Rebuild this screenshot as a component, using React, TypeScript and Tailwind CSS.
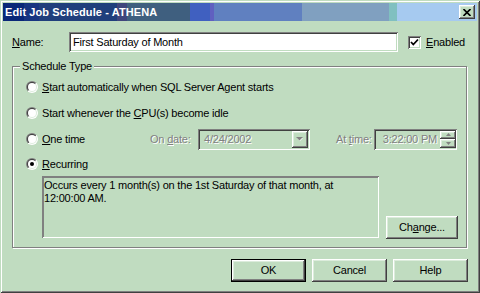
import React from "react";

const raised =
  "shadow-[inset_-1px_-1px_0_#404040,inset_1px_1px_0_#ffffff,inset_-2px_-2px_0_#808080,inset_2px_2px_0_#dcecdc]";
const sunken =
  "shadow-[inset_1px_1px_0_#808080,inset_-1px_-1px_0_#ffffff,inset_2px_2px_0_#404040,inset_-2px_-2px_0_#c0dcc0]";
const disabledText = "text-[#808080] [text-shadow:1px_1px_0_#ffffff]";

function Radio({ checked }: { checked?: boolean }) {
  return (
    <div className="w-[12px] h-[12px] rounded-full bg-[linear-gradient(135deg,#808080_50%,#ffffff_50%)] flex items-center justify-center shrink-0">
      <div className="w-[10px] h-[10px] rounded-full bg-[linear-gradient(135deg,#404040_50%,#dcecdc_50%)] flex items-center justify-center">
        <div className="w-[8px] h-[8px] rounded-full bg-white flex items-center justify-center">
          {checked && <div className="w-[4px] h-[4px] rounded-full bg-black" />}
        </div>
      </div>
    </div>
  );
}

function Button({
  children,
  isDefault,
  className = "",
}: {
  children: React.ReactNode;
  isDefault?: boolean;
  className?: string;
}) {
  if (isDefault) {
    return (
      <div className={`border border-black ${className}`}>
        <div className={`w-full h-full flex items-center justify-center ${raised}`}>{children}</div>
      </div>
    );
  }
  return <div className={`flex items-center justify-center ${raised} ${className}`}>{children}</div>;
}

export default function App() {
  return (
    <div className="w-[480px] h-[293px] bg-[#c0dcc0] p-[3px] flex flex-col font-['Liberation_Sans',Arial,sans-serif] text-[11px] leading-[13px] tracking-[-0.2px] text-black shadow-[inset_1px_1px_0_#c0dcc0,inset_-1px_-1px_0_#404040,inset_2px_2px_0_#ffffff,inset_-2px_-2px_0_#808080] overflow-hidden">
      {/* Title bar */}
      <div className="h-[18px] flex items-center justify-between pl-[2px] pr-[2px] bg-[linear-gradient(to_right,#0a2878_0px,#0a2878_21px,#173581_21px,#173581_36px,#203f7c_36px,#203f7c_114px,#40467c_114px,#40467c_124px,#3f5f7f_124px,#3f5f7f_187px,#4060c0_187px,#4060c0_207px,#6060c0_207px,#6060c0_211px,#6080c0_211px,#6080c0_299px,#80a0c0_299px,#80a0c0_386px,#80c0c0_386px,#80c0c0_394px,#a6caf0_394px,#a6caf0_100%)]">
        <span className="text-white font-bold text-[11px] leading-[13px] tracking-[0.1px]">Edit Job Schedule - ATHENA</span>
        <div className={`w-[16px] h-[14px] bg-[#c0dcc0] flex items-center justify-center ${raised}`}>
          <svg width="8" height="7" viewBox="0 0 8 7">
            <path d="M0.5 0 L7.5 7 M7.5 0 L0.5 7" stroke="black" strokeWidth="1.6" />
          </svg>
        </div>
      </div>

      <div className="flex flex-col px-[9px]">
        {/* Name row */}
        <div className="mt-[11px] h-[20px] flex items-center">
          <span className="w-[57px]">
            <u>N</u>ame:
          </span>
          <div className={`w-[329px] h-[20px] bg-white flex items-center pl-[4px] ${sunken}`}>
            First Saturday of Month
          </div>
          <div className={`ml-[10px] w-[13px] h-[13px] bg-white flex items-center justify-center ${sunken}`}>
            <svg width="9" height="9" viewBox="0 0 9 9">
              <path d="M1 4 L3.3 6.5 L8 1.5" stroke="black" strokeWidth="1.8" fill="none" />
            </svg>
          </div>
          <span className="ml-[5px]">
            <u>E</u>nabled
          </span>
        </div>

        {/* Group box */}
        <div className="relative mt-[14px] w-[455px] h-[182px] border border-[#808080] shadow-[inset_1px_1px_0_#ffffff,1px_1px_0_#ffffff]">
          <span className="absolute -top-[7px] left-[7px] px-[2px] bg-[#c0dcc0]">Schedule Type</span>
          <div className="flex flex-col pt-[7px] pl-[13px]">
            <div className="h-[26px] flex items-center">
              <Radio />
              <span className="ml-[4px]">
                <u>S</u>tart automatically when SQL Server Agent starts
              </span>
            </div>
            <div className="h-[26px] flex items-center">
              <Radio />
              <span className="ml-[4px]">
                Start whenever the <u>C</u>PU(s) become idle
              </span>
            </div>
            <div className="h-[26px] flex items-center">
              <div className="w-[124px] flex items-center">
                <Radio />
                <span className="ml-[4px]">
                  <u>O</u>ne time
                </span>
              </div>
              <span className={`w-[48px] ${disabledText}`}>
                On <u>d</u>ate:
              </span>
              <div className={`w-[112px] h-[21px] flex items-center justify-between pl-[6px] pr-[2px] ${sunken}`}>
                <span className={disabledText}>4/24/2002</span>
                <div className={`w-[16px] h-[17px] flex items-center justify-center ${raised}`}>
                  <svg width="8" height="5" viewBox="0 0 8 5">
                    <path d="M1 1 H7 L4 4 Z" fill="#ffffff" />
                    <path d="M0 0 H7 L3.5 3.5 Z" fill="#808080" />
                  </svg>
                </div>
              </div>
              <span className={`ml-[26px] w-[38px] ${disabledText}`}>
                At <u>t</u>ime:
              </span>
              <div className={`w-[83px] h-[21px] flex items-center justify-end pr-[1px] ${sunken}`}>
                <span className={`mr-[3px] ${disabledText}`}>3:22:00 PM</span>
                <div className="flex flex-col">
                  <div className={`w-[16px] h-[8px] flex items-center justify-center ${raised}`}>
                    <svg width="5" height="3" viewBox="0 0 5 3">
                      <path d="M2.5 0 L5 3 H0 Z" fill="#808080" />
                    </svg>
                  </div>
                  <div className={`w-[16px] h-[9px] flex items-center justify-center ${raised}`}>
                    <svg width="5" height="3" viewBox="0 0 5 3">
                      <path d="M0 0 H5 L2.5 3 Z" fill="#808080" />
                    </svg>
                  </div>
                </div>
              </div>
            </div>
            <div className="h-[24px] flex items-center">
              <Radio checked />
              <span className="ml-[4px]">
                <u>R</u>ecurring
              </span>
            </div>
            <div className="flex items-start">
              <div className="ml-[16px] w-[337px] h-[62px] pl-[2px] pt-[3px] shadow-[inset_1px_1px_0_#808080,inset_-1px_-1px_0_#ffffff,inset_2px_2px_0_#808080]">
                Occurs every 1 month(s) on the 1st Saturday of that month, at
                <br />
                12:00:00 AM.
              </div>
              <Button className="ml-[7px] mt-[40px] w-[72px] h-[23px]">
                <span>
                  Ch<u>a</u>nge...
                </span>
              </Button>
            </div>
          </div>
        </div>

        {/* Bottom buttons */}
        <div className="mt-[11px] flex justify-end gap-[6px]">
          <Button isDefault className="w-[75px] h-[23px]">
            OK
          </Button>
          <Button className="w-[75px] h-[23px]">Cancel</Button>
          <Button className="w-[75px] h-[23px]">Help</Button>
        </div>
      </div>
    </div>
  );
}
